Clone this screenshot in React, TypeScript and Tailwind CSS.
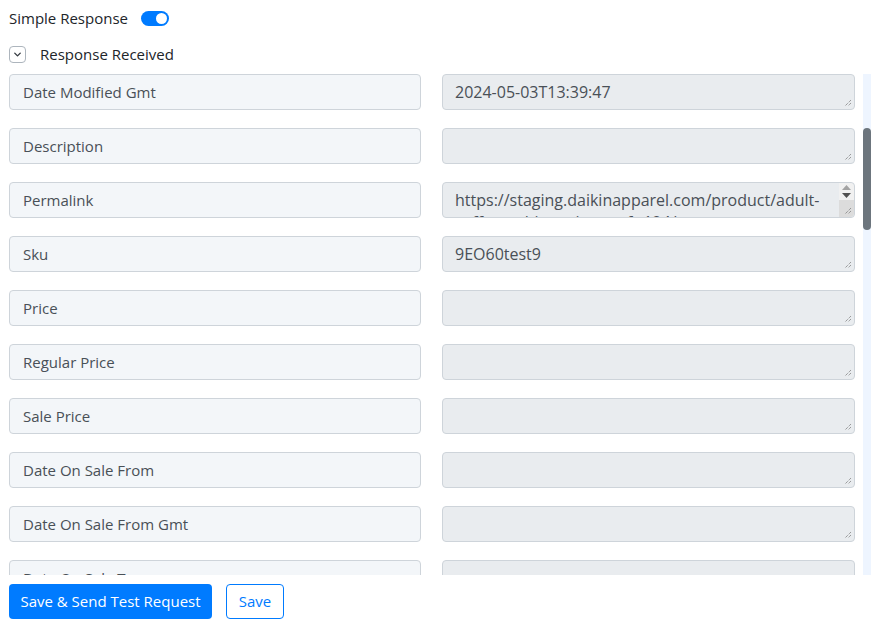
import { ChevronDown } from 'lucide-react';

type Field = { label: string; value: string; scroll?: boolean };

const FIELDS: Field[] = [
  { label: 'Date Modified Gmt', value: '2024-05-03T13:39:47' },
  { label: 'Description', value: '' },
  { label: 'Permalink', value: 'https://staging.daikinapparel.com/product/adult-\ncoffee-t-shirt-unisex-soft-124/', scroll: true },
  { label: 'Sku', value: '9EO60test9' },
  { label: 'Price', value: '' },
  { label: 'Regular Price', value: '' },
  { label: 'Sale Price', value: '' },
  { label: 'Date On Sale From', value: '' },
  { label: 'Date On Sale From Gmt', value: '' },
  { label: 'Date On Sale To', value: '' },
];

function ResizeGrip() {
  return (
    <svg className="absolute right-[2px] bottom-[2px]" width="8" height="8" viewBox="0 0 8 8">
      <path d="M7 1L1 7M7 4L4 7" stroke="#777" strokeWidth="1" strokeDasharray="1 1" />
    </svg>
  );
}

function SpinArrows() {
  return (
    <div className="absolute right-0 top-0 bottom-0 w-[15px] flex flex-col">
      <div className="h-[17px] flex flex-col items-center justify-center gap-[3px] bg-[#f1f1f1] rounded-tr-[4px]">
        <svg width="9" height="5" viewBox="0 0 9 5"><path d="M4.5 0L9 5H0z" fill="#a3a3a3" /></svg>
        <svg width="9" height="5" viewBox="0 0 9 5"><path d="M0 0h9L4.5 5z" fill="#505050" /></svg>
      </div>
      <div className="flex-1 bg-[#dcdcdc] rounded-br-[4px]" />
    </div>
  );
}

function FieldRow({ field }: { field: Field }) {
  return (
    <div className="flex gap-[21px] shrink-0">
      <div className="w-[412px] h-[36px] flex items-center px-[13px] rounded-[4px] border border-[#ced4da] bg-[#f3f6f9] text-[#495057]">
        {field.label}
      </div>
      <div className="relative w-[413px] h-[36px] overflow-hidden rounded-[4px] border border-[#ced4da] bg-[#e9ecef] text-[#495057] text-[16px]">
        <div className="px-[12px] pt-[6px] leading-[22px] whitespace-pre">{field.value}</div>
        {field.scroll && <SpinArrows />}
        <ResizeGrip />
      </div>
    </div>
  );
}

export default function App() {
  return (
    <div className="w-[881px] h-[638px] bg-white text-[15px] font-['Open_Sans','Lato',sans-serif]">
      <div className="h-[36px] flex items-center gap-[13px] px-[9px] text-[#212529]">
        <span>Simple Response</span>
        <span className="w-[28px] h-[15px] rounded-full bg-[#007bff] flex items-center justify-end pr-[2px]">
          <span className="w-[11px] h-[11px] rounded-full bg-white" />
        </span>
      </div>

      <div className="h-[36px] flex items-center gap-[14px] px-[9px] text-[#212529]">
        <span className="w-[17px] h-[17px] rounded-[4px] border border-[#adb5bd] flex items-center justify-center">
          <ChevronDown className="w-[11px] h-[11px] text-[#343a40]" strokeWidth={3} />
        </span>
        <span>Response Received</span>
      </div>

      <div className="mt-[2px] flex h-[501px]">
        <div className="w-[863px] overflow-hidden pl-[9px] pr-[8px] flex flex-col gap-[18px]">
          {FIELDS.map(field => (
            <FieldRow key={field.label} field={field} />
          ))}
        </div>
        <div className="w-[8px] bg-[#eef5ff] pt-[54px]">
          <div className="h-[102px] rounded-full bg-[#6c757d]" />
        </div>
      </div>

      <div className="mt-[9px] flex gap-[14px] px-[9px]">
        <button type="button" className="w-[203px] h-[35px] rounded-[4px] bg-[#007bff] text-white whitespace-nowrap">
          Save &amp; Send Test Request
        </button>
        <button type="button" className="w-[58px] h-[35px] rounded-[4px] border border-[#007bff] text-[#007bff] bg-white">
          Save
        </button>
      </div>
    </div>
  );
}
